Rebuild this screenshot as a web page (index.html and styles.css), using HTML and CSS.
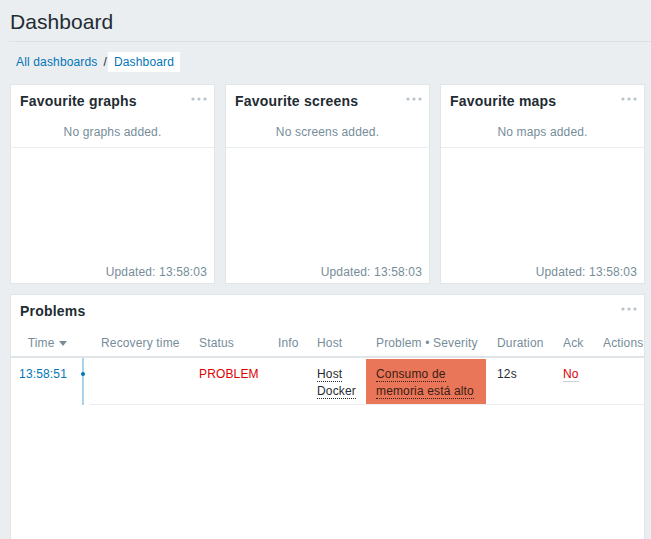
FILE: index.html
```html
<!DOCTYPE html>
<html lang="en">
<head>
<meta charset="utf-8">
<title>Dashboard</title>
<link rel="stylesheet" href="styles.css">
</head>
<body>
<header class="page-header">
  <h1 class="page-title">Dashboard</h1>
</header>
<nav class="breadcrumbs">
  <a class="crumb" href="#">All dashboards</a>
  <span class="crumb-sep">/</span>
  <a class="crumb crumb-current" href="#">Dashboard</a>
</nav>
<main class="dashboard">
  <div class="fav-row">
    <section class="widget fav-widget">
      <div class="widget-head">
        <h4 class="widget-title">Favourite graphs</h4>
        <svg class="widget-menu" width="16" height="4" viewBox="0 0 16 4"><circle cx="2" cy="2" r="1.6"/><circle cx="8" cy="2" r="1.6"/><circle cx="14" cy="2" r="1.6"/></svg>
      </div>
      <div class="widget-msg">No graphs added.</div>
      <div class="widget-foot">Updated: 13:58:03</div>
    </section>
    <section class="widget fav-widget">
      <div class="widget-head">
        <h4 class="widget-title">Favourite screens</h4>
        <svg class="widget-menu" width="16" height="4" viewBox="0 0 16 4"><circle cx="2" cy="2" r="1.6"/><circle cx="8" cy="2" r="1.6"/><circle cx="14" cy="2" r="1.6"/></svg>
      </div>
      <div class="widget-msg">No screens added.</div>
      <div class="widget-foot">Updated: 13:58:03</div>
    </section>
    <section class="widget fav-widget">
      <div class="widget-head">
        <h4 class="widget-title">Favourite maps</h4>
        <svg class="widget-menu" width="16" height="4" viewBox="0 0 16 4"><circle cx="2" cy="2" r="1.6"/><circle cx="8" cy="2" r="1.6"/><circle cx="14" cy="2" r="1.6"/></svg>
      </div>
      <div class="widget-msg">No maps added.</div>
      <div class="widget-foot">Updated: 13:58:03</div>
    </section>
  </div>
  <section class="widget problems-widget">
    <div class="widget-head problems-head">
      <h4 class="widget-title">Problems</h4>
      <svg class="widget-menu" width="16" height="4" viewBox="0 0 16 4"><circle cx="2" cy="2" r="1.6"/><circle cx="8" cy="2" r="1.6"/><circle cx="14" cy="2" r="1.6"/></svg>
    </div>
    <table class="problems">
      <colgroup>
        <col class="c-time"><col class="c-axis"><col class="c-rec"><col class="c-status"><col class="c-info"><col class="c-host"><col class="c-problem"><col class="c-duration"><col class="c-ack"><col class="c-actions">
      </colgroup>
      <thead>
        <tr>
          <th class="th-time">Time <svg class="sort-arrow" width="8" height="5" viewBox="0 0 8 5"><path d="M0 0H8L4 5Z"/></svg></th>
          <th class="th-axis"></th>
          <th class="pad-rec">Recovery time</th>
          <th>Status</th>
          <th>Info</th>
          <th>Host</th>
          <th class="pad-problem">Problem • Severity</th>
          <th class="pad-duration">Duration</th>
          <th>Ack</th>
          <th>Actions</th>
        </tr>
      </thead>
      <tbody>
        <tr>
          <td class="td-time"><a class="link" href="#">13:58:51</a></td>
          <td class="td-axis"><span class="axis-dot"></span></td>
          <td class="pad-rec row-line"></td>
          <td class="row-line"><span class="status-problem">PROBLEM</span></td>
          <td class="row-line"></td>
          <td class="row-line"><span class="link-action">Host Docker</span></td>
          <td class="pad-problem row-line sev-high"><span class="link-action">Consumo de memoria está alto</span></td>
          <td class="pad-duration row-line">12s</td>
          <td class="row-line"><a class="ack-no" href="#">No</a></td>
          <td class="row-line"></td>
        </tr>
      </tbody>
    </table>
  </section>
</main>
</body>
</html>
```
FILE: styles.css
```css
html, body {
  overflow: hidden;
}
body {
  margin: 0;
  background: #ebeef0;
  font-family: "Liberation Sans", Arial, sans-serif;
  font-size: 12px;
  letter-spacing: 0.15px;
  color: #1f2c33;
}
a {
  text-decoration: none;
}

.page-header {
  margin-left: 9px;
  padding: 10px 0 7px 1px;
  border-bottom: 1px solid #dce1e4;
}
.page-title {
  margin: 0;
  font-size: 21px;
  line-height: 24px;
  font-weight: normal;
  letter-spacing: 0.05px;
  color: #1f2c33;
}

.breadcrumbs {
  display: flex;
  align-items: stretch;
  margin: 10px 0 0 10px;
  height: 20px;
  line-height: 19px;
}
.crumb {
  color: #0275b8;
  padding: 1px 6px 0;
}
.crumb-sep {
  padding-top: 1px;
  color: #1f2c33;
}
.crumb-current {
  background: #fff;
  margin-left: 1px;
}

.dashboard {
  padding: 12px 6px 0 10px;
}
.fav-row {
  display: grid;
  grid-template-columns: repeat(3, 205px);
  column-gap: 10px;
}
.widget {
  background: #fff;
  border: 1px solid #e0e5e8;
  box-sizing: border-box;
  display: flex;
  flex-direction: column;
}
.fav-widget {
  height: 200px;
}
.widget-head {
  display: flex;
  justify-content: space-between;
  align-items: flex-start;
  padding: 8px 7px 5px 9px;
}
.widget-title {
  margin: 0;
  font-size: 14px;
  line-height: 17px;
  font-weight: bold;
  letter-spacing: 0.2px;
  color: #1f2c33;
}
.widget-menu {
  margin-top: 4px;
  fill: #b6c3ca;
}
.widget-msg {
  text-align: center;
  color: #768d99;
  line-height: 14px;
  padding: 10px 9px 8px;
  border-bottom: 1px solid #ebeef0;
}
.widget-foot {
  margin-top: auto;
  text-align: right;
  color: #768d99;
  line-height: 14px;
  padding: 0 7px 4px;
}

.problems-widget {
  margin-top: 10px;
  height: 260px;
}
.problems-head {
  padding-bottom: 9px;
}

.problems {
  table-layout: fixed;
  border-collapse: separate;
  border-spacing: 0;
  width: 633px;
}
.c-time { width: 61px; }
.c-axis { width: 18px; }
.c-rec { width: 104px; }
.c-status { width: 79px; }
.c-info { width: 39px; }
.c-host { width: 54px; }
.c-problem { width: 120px; }
.c-duration { width: 72px; }
.c-ack { width: 40px; }
.c-actions { width: 46px; }

.problems th {
  font-weight: normal;
  text-align: left;
  color: #768d99;
  line-height: 14px;
  padding: 7px 5px 6px;
  border-bottom: 2px solid #dfe4e7;
  white-space: nowrap;
}
.problems th.th-time {
  text-align: right;
}
.problems th.th-axis {
  padding: 0;
}
.sort-arrow {
  fill: #768d99;
  margin-left: 1px;
  vertical-align: 1px;
}
.problems td {
  vertical-align: top;
  line-height: 17px;
  padding: 7px 5px 4px;
  border-top: 1px solid #fff;
  background-clip: padding-box;
}
.problems .pad-rec { padding-left: 11px; }
.problems .pad-problem { padding-left: 10px; }
.problems .pad-duration { padding-left: 11px; }
.problems td.row-line {
  border-bottom: 1px solid #ebeef0;
}
.problems td.td-time {
  text-align: right;
  border-bottom: 1px solid transparent;
}
.problems td.td-axis {
  padding: 0;
  border-top: 1px solid transparent;
  border-bottom: 1px solid transparent;
  background-image: linear-gradient(#aad2ea, #aad2ea);
  background-repeat: no-repeat;
  background-position: 10px 0;
  background-size: 2px 100%;
  background-clip: border-box;
  background-origin: border-box;
}
.axis-dot {
  display: block;
  width: 4px;
  height: 4px;
  margin: 13px 0 0 9px;
  border-radius: 50%;
  background: #0275b8;
}
.link {
  color: #0275b8;
}
.status-problem {
  color: #dc0000;
}
.link-action {
  color: #1f2c33;
  border-bottom: 1px dotted #1f2c33;
}
.sev-high {
  background: #e97659;
}
.sev-high .link-action {
  color: #3b1d14;
  border-bottom-color: #3b1d14;
}
.ack-no {
  color: #dc0000;
  border-bottom: 1px solid #c9d3d9;
}
```
